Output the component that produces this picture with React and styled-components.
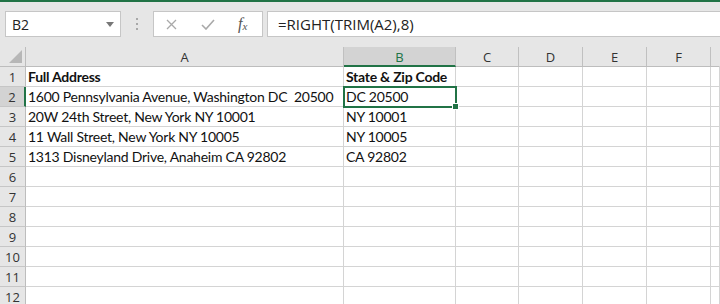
import React from 'react'
import styled, { createGlobalStyle } from 'styled-components';

const GREEN = '#217346';

const Global = createGlobalStyle`
  html, body { margin: 0; padding: 0; background: #fff; }
  body { width: 720px; height: 304px; overflow: hidden; }
`;

const Page = styled.div`
  width: 720px;
  height: 304px;
  overflow: hidden;
  display: flex;
  flex-direction: column;
  background: #e6e6e6;
  border-top: 2px solid ${GREEN};
  box-sizing: border-box;
`;

const Toolbar = styled.div`
  height: 45px;
  display: flex;
  align-items: flex-start;
  padding: 9px 0 0 5px;
  box-sizing: border-box;
  flex-shrink: 0;
`;

const NameBox = styled.div`
  width: 116px;
  height: 26px;
  box-sizing: border-box;
  background: #fff;
  border: 1px solid #c6c6c6;
  display: flex;
  align-items: center;
  justify-content: space-between;
  padding: 0 6px 0 6px;
  font-family: "Open Sans", "Noto Sans", sans-serif;
  font-size: 14px;
  color: #222;
`;

const Caret = styled.span`
  width: 0;
  height: 0;
  border-left: 4px solid transparent;
  border-right: 4px solid transparent;
  border-top: 5px solid #777;
`;

const Grip = styled.div`
  width: 32px;
  height: 26px;
  display: flex;
  flex-direction: column;
  align-items: center;
  justify-content: center;
  gap: 3px;
  span {
    width: 2px;
    height: 2px;
    background: #a8a8a8;
  }
`;

const ButtonBox = styled.div`
  width: 110px;
  height: 26px;
  box-sizing: border-box;
  background: #fff;
  border: 1px solid #c6c6c6;
  display: flex;
  align-items: center;
  padding-left: 12px;
  gap: 16px;
`;

const Fx = styled.span`
  font-family: "Liberation Serif", "DejaVu Serif", serif;
  font-style: italic;
  font-size: 16px;
  color: #555;
  margin-left: 7px;
  sub { font-size: 11px; vertical-align: -1px; }
`;

const FormulaBar = styled.div`
  flex: 1;
  height: 26px;
  margin-left: 4px;
  box-sizing: border-box;
  background: #fff;
  border: 1px solid #c6c6c6;
  border-right: none;
  display: flex;
  align-items: center;
  padding-left: 10px;
  font-family: "Open Sans", "Noto Sans", sans-serif;
  font-size: 15px;
  color: #222;
`;

const Sheet = styled.div`
  display: grid;
  grid-template-columns: 26px 318px 112px 63px 64px 64px 64px 1fr;
  grid-auto-rows: 20px;
  background: #fff;
  flex: 1;
`;

const Corner = styled.div`
  background: #e6e6e6;
  border-right: 1px solid #bdbdbd;
  border-bottom: 1px solid #bdbdbd;
  box-sizing: border-box;
  display: flex;
  align-items: flex-end;
  justify-content: flex-end;
  padding: 0 3px 3px 0;
`;

const ColHead = styled.div`
  background: ${({ $active }) => ($active ? '#d3d3d3' : '#e6e6e6')};
  color: ${({ $active }) => ($active ? GREEN : '#333')};
  border-right: 1px solid ${({ $last }) => ($last ? 'transparent' : '#c0c0c0')};
  border-bottom: ${({ $active }) => ($active ? `2px solid ${GREEN}` : '1px solid #bdbdbd')};
  box-sizing: border-box;
  display: flex;
  align-items: center;
  justify-content: center;
  font-family: "Open Sans", "Noto Sans", sans-serif;
  font-size: 13px;
  padding-top: ${({ $active }) => ($active ? '1px' : '0')};
`;

const RowHead = styled.div`
  background: ${({ $active }) => ($active ? '#d3d3d3' : '#e6e6e6')};
  color: #333;
  border-right: ${({ $active }) => ($active ? `2px solid ${GREEN}` : '1px solid #bdbdbd')};
  border-bottom: 1px solid #c6c6c6;
  box-sizing: border-box;
  display: flex;
  align-items: center;
  justify-content: center;
  font-family: "Open Sans", "Noto Sans", sans-serif;
  font-size: 13px;
`;

const Cell = styled.div`
  position: relative;
  border-right: 1px solid #d4d4d4;
  border-bottom: 1px solid #d4d4d4;
  box-sizing: border-box;
  display: flex;
  align-items: center;
  padding-left: 2px;
  font-family: "Lato", "Liberation Sans", sans-serif;
  font-size: 14px;
  letter-spacing: -0.25px;
  font-weight: ${({ $bold }) => ($bold ? 700 : 400)};
  color: #111;
  white-space: pre;
  overflow: visible;

  ${({ $selected }) => $selected && `
    z-index: 2;
    outline: 2px solid ${GREEN};
    outline-offset: -1px;
    &::after {
      content: '';
      position: absolute;
      right: -4px;
      bottom: -4px;
      width: 5px;
      height: 5px;
      background: ${GREEN};
      border: 1px solid #fff;
    }
  `}
`;

const columns = ['A', 'B', 'C', 'D', 'E', 'F', ''];

const data = [
  ['Full Address', 'State & Zip Code'],
  ['1600 Pennsylvania Avenue, Washington DC  20500', 'DC 20500'],
  ['20W 24th Street, New York NY 10001', 'NY 10001'],
  ['11 Wall Street, New York NY 10005', 'NY 10005'],
  ['1313 Disneyland Drive, Anaheim CA 92802', 'CA 92802'],
];

const App = () => {
  const rows = Array.from({ length: 12 }, (_, i) => data[i] || []);
  return (
    <>
      <Global />
      <Page>
        <Toolbar>
          <NameBox>
            B2
            <Caret />
          </NameBox>
          <Grip><span /><span /><span /></Grip>
          <ButtonBox>
            <svg width="11" height="11" viewBox="0 0 11 11">
              <path d="M1 1 L10 10 M10 1 L1 10" stroke="#a9a9a9" strokeWidth="1.3" fill="none" />
            </svg>
            <svg width="14" height="11" viewBox="0 0 14 11" style={{ marginLeft: 8 }}>
              <path d="M1 6 L5 10 L13 1" stroke="#a9a9a9" strokeWidth="1.6" fill="none" />
            </svg>
            <Fx>f<sub>x</sub></Fx>
          </ButtonBox>
          <FormulaBar>=RIGHT(TRIM(A2),8)</FormulaBar>
        </Toolbar>
        <Sheet>
          <Corner>
            <svg width="13" height="13" viewBox="0 0 13 13">
              <path d="M13 0 L13 13 L0 13 Z" fill="#b7b7b7" />
            </svg>
          </Corner>
          {columns.map((c, i) => (
            <ColHead key={i} $active={c === 'B'} $last={i === columns.length - 1}>{c}</ColHead>
          ))}
          {rows.map((r, ri) => (
            <React.Fragment key={ri}>
              <RowHead $active={ri === 1}>{ri + 1}</RowHead>
              {columns.map((c, ci) => (
                <Cell key={ci} $bold={ri === 0} $selected={ri === 1 && ci === 1}>
                  {r[ci] || ''}
                </Cell>
              ))}
            </React.Fragment>
          ))}
        </Sheet>
      </Page>
    </>
  );
};

export default App
